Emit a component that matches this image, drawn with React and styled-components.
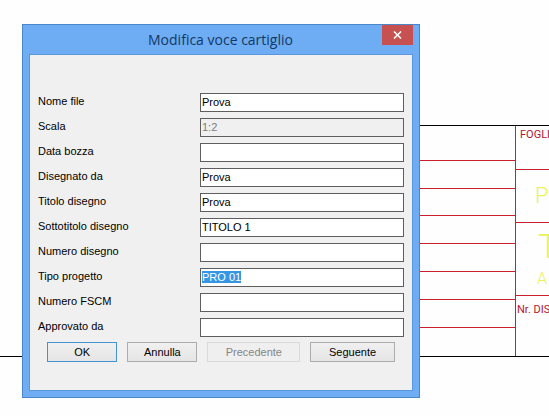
import React, { useEffect, useRef } from 'react';
import styled, { createGlobalStyle } from 'styled-components';

const GlobalStyle = createGlobalStyle`
  * {
    box-sizing: border-box;
  }
  body {
    margin: 0;
    background-color: #fefefe;
  }
`

const Desktop = styled.main`
  position: relative;
  display: flex;
  min-height: 100vh;
  padding: 24px 129px 18px 22px;
  overflow: hidden;
  font-family: "Liberation Sans", Arial, sans-serif;
  font-size: 11px;
`

const Drawing = styled.svg`
  position: absolute;
  top: 0;
  left: 0;
  width: 100%;
  height: 100%;
  font-family: Roboto, sans-serif;
  shape-rendering: crispEdges;
`

const Dialog = styled.section`
  position: relative;
  display: flex;
  flex-direction: column;
  flex: 1;
  padding: 0 6px 6px;
  border: 1px solid #4a86c8;
  background-color: #6eacf4;
`

const TitleBar = styled.header`
  display: flex;
  justify-content: flex-end;
  align-items: flex-start;
  height: 29px;
`

const Title = styled.h1`
  flex: 1;
  margin: 0;
  padding-left: 30px;
  font-family: "Open Sans", "Noto Sans", sans-serif;
  font-size: 14px;
  font-weight: normal;
  line-height: 30px;
  text-align: center;
  color: #123963;
`

const CloseButton = styled.button`
  display: flex;
  justify-content: center;
  align-items: center;
  width: 31px;
  height: 20px;
  padding: 0;
  border: none;
  background-color: #c75050;
`

const Form = styled.form`
  flex: 1;
  padding: 38px 8px 28px;
  border: 1px solid #5a96dc;
  background-color: #f0f0f0;
`

const Fields = styled.div`
  display: grid;
  gap: 6px;
  margin-bottom: 5px;
`

const Row = styled.div`
  display: grid;
  grid-template-columns: 162px 1fr;
`

const Label = styled.label`
  line-height: 17px;
  color: #000000;
`

const Input = styled.input`
  width: 100%;
  height: 19px;
  padding: 0 1px 2px;
  border: 1px solid #5e5e5e;
  border-radius: 0;
  outline: none;
  background-color: #ffffff;
  font-family: inherit;
  font-size: inherit;
  color: #000000;

  &:disabled {
    background-color: #f0f0f0;
    color: #7c7c7c;
  }
  &::selection {
    background-color: #3796e4;
    color: #ffffff;
  }
`

const ButtonBar = styled.div`
  display: flex;
  gap: 10px;
  padding: 0 9px;
`

const Button = styled.button`
  flex: ${props => props.$size} 1 0;
  height: 20px;
  padding: 0;
  border: 1px solid ${props => (props.$main ? '#4392d2' : '#acacac')};
  background: linear-gradient(#f0f0f0, #e5e5e5);
  font-family: inherit;
  font-size: inherit;
  color: #000000;

  &:disabled {
    border-color: #d9d9d9;
    background: #efefef;
    color: #858585;
  }
`

const fields = [
  { id: 'file', label: 'Nome file', value: 'Prova' },
  { id: 'scala', label: 'Scala', value: '1:2', disabled: true },
  { id: 'data', label: 'Data bozza', value: '' },
  { id: 'autore', label: 'Disegnato da', value: 'Prova' },
  { id: 'titolo', label: 'Titolo disegno', value: 'Prova' },
  { id: 'sottotitolo', label: 'Sottotitolo disegno', value: 'TITOLO 1' },
  { id: 'numero', label: 'Numero disegno', value: '' },
  { id: 'tipo', label: 'Tipo progetto', value: 'PRO 01', active: true },
  { id: 'fscm', label: 'Numero FSCM', value: '' },
  { id: 'approvato', label: 'Approvato da', value: '' },
]

const leftLines = [160, 188, 215, 243, 271, 299, 327]
const rightLines = [169, 222, 295]

const TitleBlock = () => (
  <Drawing aria-hidden="true">
    <g fill="#c8202c">
      {leftLines.map(y => <rect key={y} x="400" y={y} width="116" height="1" />)}
      {rightLines.map(y => <rect key={y} x="515" y={y} width="100%" height="1" />)}
      <rect x="515" y="126" width="1" height="230" />
    </g>
    <rect x="400" y="125" width="100%" height="1" fill="#000000" />
    <rect x="0" y="356" width="100%" height="1" fill="#000000" />
    <g fill="#b3152c">
      <text x="520" y="138" fontSize="11">FOGLI</text>
      <text x="517" y="313" fontSize="11">Nr. DIS</text>
    </g>
    <g fill="#e8f35a" fontWeight="300">
      <text x="535" y="203" fontSize="22">P</text>
      <text x="538" y="258" fontSize="34">T</text>
      <text x="537" y="284" fontSize="16">A</text>
    </g>
  </Drawing>
)

const App = () => {
  const activeInput = useRef(null)

  useEffect(() => {
    activeInput.current.focus()
    activeInput.current.select()
  }, [])

  return (
    <Desktop>
      <GlobalStyle />
      <TitleBlock />
      <Dialog role="dialog" aria-labelledby="dialog-title">
        <TitleBar>
          <Title id="dialog-title">Modifica voce cartiglio</Title>
          <CloseButton type="button" aria-label="Chiudi">
            <svg width="9" height="8" viewBox="0 0 9 8">
              <path d="M1 0.5 L8 7.5 M8 0.5 L1 7.5" stroke="#ffffff" strokeWidth="1.6" />
            </svg>
          </CloseButton>
        </TitleBar>
        <Form onSubmit={e => e.preventDefault()}>
          <Fields>
            {fields.map(field => (
              <Row key={field.id}>
                <Label htmlFor={field.id}>{field.label}</Label>
                <Input
                  id={field.id}
                  ref={field.active ? activeInput : null}
                  defaultValue={field.value}
                  disabled={field.disabled}
                  autoComplete="off"
                />
              </Row>
            ))}
          </Fields>
          <ButtonBar>
            <Button type="submit" $size={70} $main>OK</Button>
            <Button type="button" $size={70}>Annulla</Button>
            <Button type="button" $size={93} disabled>Precedente</Button>
            <Button type="button" $size={85}>Seguente</Button>
          </ButtonBar>
        </Form>
      </Dialog>
    </Desktop>
  )
}

export default App;
